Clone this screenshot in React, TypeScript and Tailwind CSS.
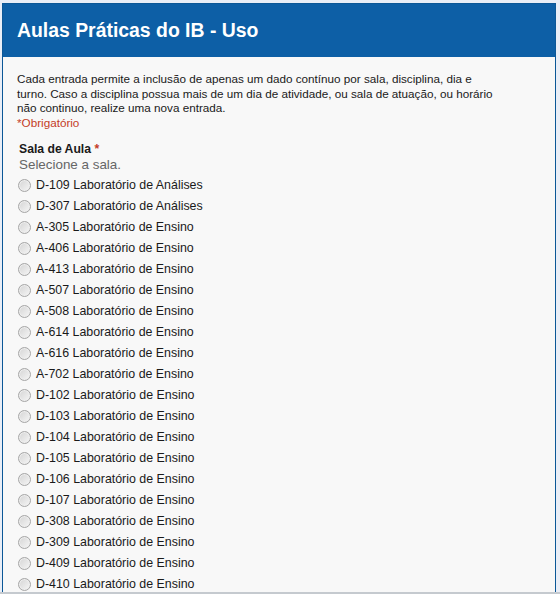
const SALAS = [
  'D-109 Laboratório de Análises',
  'D-307 Laboratório de Análises',
  'A-305 Laboratório de Ensino',
  'A-406 Laboratório de Ensino',
  'A-413 Laboratório de Ensino',
  'A-507 Laboratório de Ensino',
  'A-508 Laboratório de Ensino',
  'A-614 Laboratório de Ensino',
  'A-616 Laboratório de Ensino',
  'A-702 Laboratório de Ensino',
  'D-102 Laboratório de Ensino',
  'D-103 Laboratório de Ensino',
  'D-104 Laboratório de Ensino',
  'D-105 Laboratório de Ensino',
  'D-106 Laboratório de Ensino',
  'D-107 Laboratório de Ensino',
  'D-308 Laboratório de Ensino',
  'D-309 Laboratório de Ensino',
  'D-409 Laboratório de Ensino',
  'D-410 Laboratório de Ensino',
];

function Radio() {
  return (
    <span className="h-[13px] w-[13px] shrink-0 rounded-full border border-[#a6a6a6] bg-gradient-to-br from-[#d4d4d4] to-[#f6f6f6] shadow-[inset_0_0_0_1px_#eeeeee]" />
  );
}

export default function App() {
  return (
    <div className="flex h-[594px] w-[560px] flex-col overflow-hidden bg-[#e9eef7] font-['Liberation_Sans',Arial,sans-serif]">
      <div className="min-h-0 flex-1 overflow-hidden pl-[2px] pt-[3px]">
        <div className="w-[554px] border border-[#0b5797] bg-[#f8f8f8]">
          <div className="flex h-[53px] items-center bg-[#0d5fa6] pl-[14px]">
            <h1 className="text-[19.4px] font-bold text-white">Aulas Práticas do IB - Uso</h1>
          </div>

          <div className="px-[14px] pt-[15px] text-[#1a1a1a]">
            <div className="text-[11.7px] leading-[14.7px]">
              <p className="max-w-[481px]">
                Cada entrada permite a inclusão de apenas um dado contínuo por sala, disciplina, dia
                e turno. Caso a disciplina possua mais de um dia de atividade, ou sala de atuação, ou
                horário não continuo, realize uma nova entrada.
              </p>
              <p className="text-[#c43c27]">*Obrigatório</p>
            </div>

            <div className="mt-[11px]">
              <div className="pl-[2px] text-[12.2px] font-bold leading-[15px]">
                Sala de Aula <span className="text-[#c43c27]">*</span>
              </div>
              <div className="pl-[2px] text-[13.4px] leading-[15px] text-[#666666]">
                Selecione a sala.
              </div>

              <ul className="mt-[3px] text-[12.4px] leading-[15px]">
                {SALAS.map(sala => (
                  <li key={sala} className="flex h-[21px] items-center gap-[5px] pl-[1px]">
                    <Radio />
                    <span>{sala}</span>
                  </li>
                ))}
              </ul>
            </div>
          </div>
        </div>
      </div>
      <div className="h-[2px] bg-[#c5cacf]" />
    </div>
  );
}
